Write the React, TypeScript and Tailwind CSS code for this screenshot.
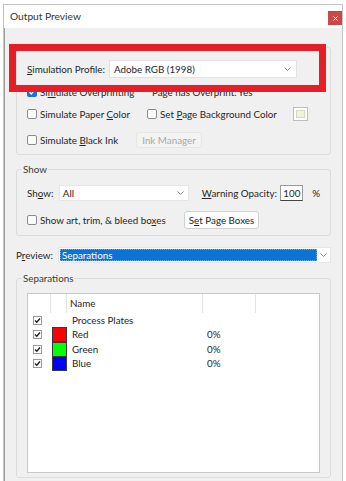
import React from 'react';

const font = { fontFamily: 'Lato, "Noto Sans", sans-serif' };

const U: React.FC<{ children: React.ReactNode }> = ({ children }) => (
  <span className="underline underline-offset-[1px]">{children}</span>
);

const Chevron: React.FC = () => (
  <svg width="7" height="4" viewBox="0 0 7 4" className="shrink-0">
    <path d="M0.5 0.5 L3.5 3.5 L6.5 0.5" fill="none" stroke="#8a8a8a" strokeWidth="1" />
  </svg>
);

const Box: React.FC<{ checked?: boolean }> = ({ checked }) =>
  checked ? (
    <span className="w-[10px] h-[10px] rounded-[2px] bg-[#1f6fd0] flex items-center justify-center shrink-0">
      <svg width="8" height="8" viewBox="0 0 8 8">
        <path d="M1.5 4.2 L3.3 6 L6.6 2" fill="none" stroke="#fff" strokeWidth="1.3" />
      </svg>
    </span>
  ) : (
    <span className="w-[10px] h-[10px] rounded-[2px] border border-[#8c8c8c] bg-[#fbfbfb] shrink-0" />
  );

const ListCheck: React.FC = () => (
  <span className="w-[9px] h-[9px] border border-[#9a9a9a] bg-white flex items-center justify-center shrink-0">
    <svg width="7" height="7" viewBox="0 0 7 7">
      <path d="M1 3.5 L2.8 5.3 L6 1.5" fill="none" stroke="#222" strokeWidth="1.4" />
    </svg>
  </span>
);

const Group: React.FC<{ label: string; className?: string; children: React.ReactNode }> = ({ label, className = '', children }) => (
  <div className={`relative border border-[#dcdcdc] rounded-[3px] ${className}`}>
    <span className="absolute -top-[7px] left-[5px] px-[1px] bg-[#f0f0f0] leading-[12px] text-[#3a3a3a]">{label}</span>
    {children}
  </div>
);

const plates = [
  { name: 'Process Plates', color: '', pct: '' },
  { name: 'Red', color: 'bg-[#ff0000]', pct: '0%' },
  { name: 'Green', color: 'bg-[#00ff00]', pct: '0%' },
  { name: 'Blue', color: 'bg-[#0000ff]', pct: '0%' },
];

const App: React.FC = () => {
  return (
    <div className="w-[346px] h-[481px] bg-white overflow-hidden relative text-[9.8px] text-[#262626] whitespace-nowrap" style={font}>
      <div className="ml-[3px] mt-[4px] w-[340px] h-[500px] border border-[#c4c4c4] flex flex-col">
        {/* title bar */}
        <div className="h-[23px] bg-white flex items-center justify-between pl-[6px] shrink-0">
          <span className="text-[10.2px] text-[#333]">Output Preview</span>
          <span className="w-[14px] h-[14px] bg-[#c94848] flex items-center justify-center mt-[3px]">
            <svg width="5" height="5" viewBox="0 0 5 5">
              <path d="M0.5 0.5 L4.5 4.5 M4.5 0.5 L0.5 4.5" stroke="#fff" strokeWidth="1" />
            </svg>
          </span>
        </div>

        {/* body */}
        <div className="flex-1 bg-[#f0f0f0] border-l border-[#9d9d9d] px-[11px] pt-[19px]">
          <Group label="Simulate" className="pt-[12px] pb-[6px] pl-[10px] pr-[10px]">
            <div className="h-[18px] flex items-center">
              <span className="w-[82px]"><U>S</U>imulation Profile:</span>
              <div className="w-[188px] h-[18px] bg-white border border-[#e2e2e2] flex items-center justify-between pl-[4px] pr-[5px]">
                <span>Adobe RGB (1998)</span>
                <Chevron />
              </div>
            </div>
            <div className="h-[14px] mt-[7px] flex items-center">
              <div className="w-[125px] flex items-center gap-[3px]">
                <Box checked />
                <span>Si<U>m</U>ulate Overprinting</span>
              </div>
              <span className="w-[86px]">Page has Overprint:</span>
              <span>Yes</span>
            </div>
            <div className="h-[14px] mt-[8px] flex items-center">
              <div className="w-[120px] flex items-center gap-[3px]">
                <Box />
                <span>Simulate Paper <U>C</U>olor</span>
              </div>
              <div className="w-[146px] flex items-center gap-[3px]">
                <Box />
                <span>Set <U>P</U>age Background Color</span>
              </div>
              <span className="w-[15px] h-[14px] border border-[#bdbdbd] bg-white p-[2px] flex">
                <span className="flex-1 bg-[#f1f3da] border border-[#d6d6c4]" />
              </span>
            </div>
            <div className="h-[16px] mt-[11px] flex items-center">
              <div className="w-[109px] flex items-center gap-[3px]">
                <Box />
                <span>Simulate <U>B</U>lack Ink</span>
              </div>
              <span className="w-[66px] h-[16px] border border-[#e6e6e6] bg-[#f3f3f3] rounded-[2px] text-[#a8a8a8] flex items-center justify-center">
                Ink Manager
              </span>
            </div>
          </Group>

          <Group label="Show" className="mt-[14px] pt-[15px] pb-[6px] pl-[10px] pr-[10px]">
            <div className="h-[16px] flex items-center">
              <span className="w-[32px]">Sh<U>o</U>w:</span>
              <div className="w-[131px] h-[16px] bg-white border border-[#e6e6e6] flex items-center justify-between pl-[3px] pr-[4px]">
                <span>All</span>
                <Chevron />
              </div>
              <span className="ml-[13px] w-[79px]"><U>W</U>arning Opacity:</span>
              <span className="w-[23px] h-[16px] bg-white border border-[#9a9a9a] border-b-[#444] flex items-center pl-[2px]">100</span>
              <span className="ml-[9px]">%</span>
            </div>
            <div className="h-[18px] mt-[10px] flex items-center">
              <div className="w-[157px] flex items-center gap-[3px]">
                <Box />
                <span>Show art, trim, &amp; bleed bo<U>x</U>es</span>
              </div>
              <span className="w-[75px] h-[18px] border border-[#d0d0d0] bg-[#fdfdfd] rounded-[3px] flex items-center justify-center">
                S<U>e</U>t Page Boxes
              </span>
            </div>
          </Group>

          <div className="h-[16px] mt-[11px] flex items-center">
            <span className="w-[42px]">P<U>r</U>eview:</span>
            <div className="flex-1 h-[16px] bg-white border border-[#e6e6e6] flex items-center p-[1px]">
              <span className="w-[257px] h-full bg-[#0a74d6] text-white flex items-center pl-[2px] outline outline-dotted outline-[#6aa8e6] -outline-offset-1">
                Separations
              </span>
              <span className="flex-1 flex justify-center">
                <Chevron />
              </span>
            </div>
          </div>

          <Group label="Separations" className="mt-[15px] pt-[14px] pb-[4px] px-[10px]">
            <div className="h-[180px] bg-white border border-[#c9c9c9]">
              <div className="h-[19px] flex items-center">
                <span className="w-[23px] h-full border-r border-[#e3e3e3]" />
                <span className="w-[16px] h-full border-r border-[#e3e3e3]" />
                <span className="w-[136px] h-full border-r border-[#e3e3e3] flex items-center pl-[3px]">Name</span>
                <span className="w-[53px] h-full border-r border-[#e3e3e3]" />
              </div>
              {plates.map((p) => (
                <div key={p.name} className="h-[14.5px] flex items-center">
                  <span className="w-[24px] pl-[5px] flex items-center">
                    <ListCheck />
                  </span>
                  <span className="w-[16px] h-full flex items-center">
                    {p.color && <span className={`w-[15px] h-[15px] border border-[#3a3a3a] ${p.color}`} />}
                  </span>
                  <span className="w-[136px] pl-[4px]">{p.name}</span>
                  <span className="pl-[3px]">{p.pct}</span>
                </div>
              ))}
            </div>
          </Group>
        </div>
      </div>

      {/* red highlight drawn over the dialog */}
      <div className="absolute left-[9px] top-[44px] w-[317px] h-[48px] border-[7px] border-[#e41f27]" />
    </div>
  );
};

export default App;
